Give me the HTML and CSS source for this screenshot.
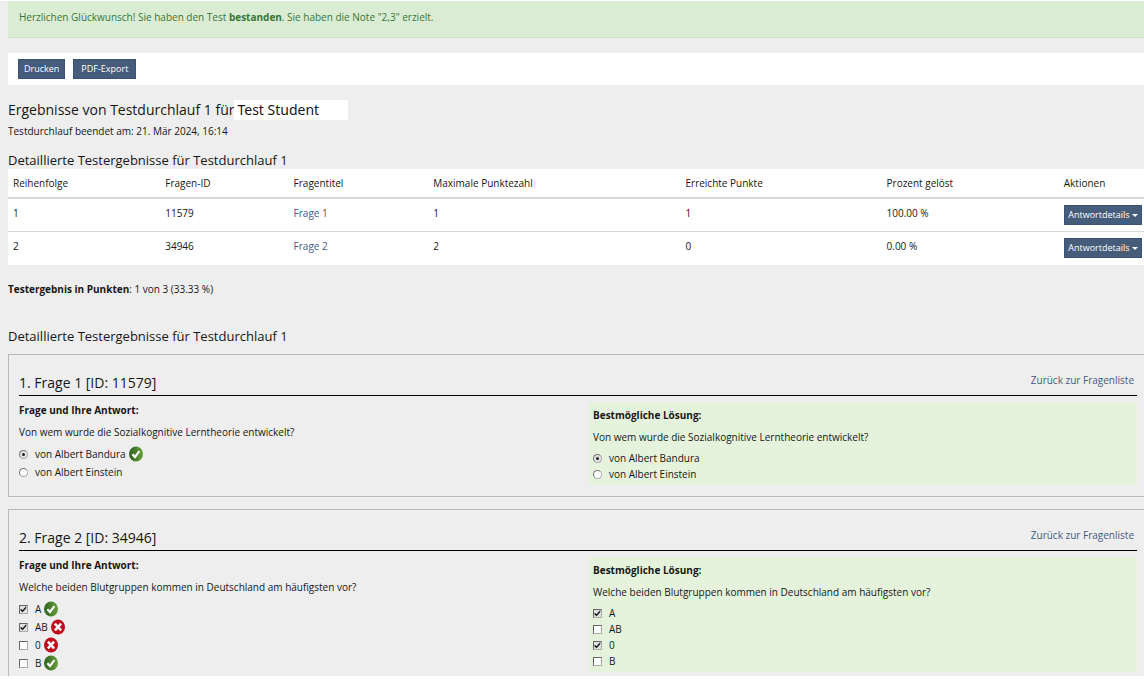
FILE: index.html
```html
<!DOCTYPE html>
<html lang="de">
<head>
<meta charset="utf-8">
<meta name="viewport" content="width=device-width, initial-scale=1">
<title>Testergebnisse</title>
<link rel="stylesheet" href="styles.css">
</head>
<body>
<svg class="sprite" aria-hidden="true">
  <defs>
    <linearGradient id="green" x1="0" y1="0" x2="1" y2="0">
      <stop offset="0" stop-color="#2c6322"/>
      <stop offset="1" stop-color="#67a037"/>
    </linearGradient>
  </defs>
  <symbol id="ok" viewBox="0 0 14 16">
    <ellipse cx="7" cy="8" rx="7" ry="7.6" fill="url(#green)"/>
    <path d="M3.4 8.2 L6 11 L10.4 5.2" fill="none" stroke="#fff" stroke-width="2.2"/>
  </symbol>
  <symbol id="wrong" viewBox="0 0 14 16">
    <ellipse cx="7" cy="8" rx="7" ry="7.6" fill="#c10a1c"/>
    <path d="M3.9 4.7 L10.1 11.3 M10.1 4.7 L3.9 11.3" fill="none" stroke="#fff" stroke-width="2.5"/>
  </symbol>
</svg>
<main class="page">
  <div class="alert" role="status">Herzlichen Glückwunsch! Sie haben den Test <strong>bestanden</strong>. Sie haben die Note "2,3" erzielt.</div>

  <div class="toolbar">
    <button class="btn" type="button">Drucken</button>
    <button class="btn btn-wide" type="button">PDF-Export</button>
  </div>

  <h1 class="heading heading-main">Ergebnisse von Testdurchlauf 1 für <span class="student">Test Student</span></h1>
  <p class="finished">Testdurchlauf beendet am: 21. Mär 2024, 16:14</p>

  <h2 class="heading heading-table">Detaillierte Testergebnisse für Testdurchlauf 1</h2>
  <table class="results">
    <colgroup>
      <col class="c-order"><col class="c-id"><col class="c-title"><col class="c-max"><col class="c-points"><col class="c-percent"><col class="c-action">
    </colgroup>
    <thead>
      <tr><th>Reihenfolge</th><th>Fragen-ID</th><th>Fragentitel</th><th>Maximale Punktezahl</th><th>Erreichte Punkte</th><th>Prozent gelöst</th><th>Aktionen</th></tr>
    </thead>
    <tbody>
      <tr><td>1</td><td>11579</td><td><a class="link" href="#frage1">Frage 1</a></td><td>1</td><td>1</td><td>100.00 %</td><td><button class="btn btn-menu" type="button">Antwortdetails<span class="caret"></span></button></td></tr>
      <tr><td>2</td><td>34946</td><td><a class="link" href="#frage2">Frage 2</a></td><td>2</td><td>0</td><td>0.00 %</td><td><button class="btn btn-menu" type="button">Antwortdetails<span class="caret"></span></button></td></tr>
    </tbody>
  </table>
  <p class="total"><strong>Testergebnis in Punkten</strong>: 1 von 3 (33.33 %)</p>

  <h2 class="heading heading-detail">Detaillierte Testergebnisse für Testdurchlauf 1</h2>

  <section class="question" id="frage1">
    <header class="question-head">
      <h3 class="heading">1. Frage 1 [ID: 11579]</h3>
      <a class="link back" href="#">Zurück zur Fragenliste</a>
    </header>
    <div class="columns">
      <div class="answer">
        <h4 class="label">Frage und Ihre Antwort:</h4>
        <p class="text">Von wem wurde die Sozialkognitive Lerntheorie entwickelt?</p>
        <div class="option"><input class="radio" type="radio" name="a1" id="a1a" checked><label for="a1a">von Albert Bandura</label><svg class="mark"><use href="#ok"/></svg></div>
        <div class="option"><input class="radio" type="radio" name="a1" id="a1b"><label for="a1b">von Albert Einstein</label></div>
      </div>
      <div class="solution">
        <h4 class="label">Bestmögliche Lösung:</h4>
        <p class="text">Von wem wurde die Sozialkognitive Lerntheorie entwickelt?</p>
        <div class="option"><input class="radio" type="radio" name="s1" id="s1a" checked><label for="s1a">von Albert Bandura</label></div>
        <div class="option"><input class="radio" type="radio" name="s1" id="s1b"><label for="s1b">von Albert Einstein</label></div>
      </div>
    </div>
  </section>

  <section class="question question-last" id="frage2">
    <header class="question-head">
      <h3 class="heading">2. Frage 2 [ID: 34946]</h3>
      <a class="link back" href="#">Zurück zur Fragenliste</a>
    </header>
    <div class="columns">
      <div class="answer">
        <h4 class="label">Frage und Ihre Antwort:</h4>
        <p class="text">Welche beiden Blutgruppen kommen in Deutschland am häufigsten vor?</p>
        <div class="option"><input class="check" type="checkbox" id="a2a" checked><label for="a2a">A</label><svg class="mark"><use href="#ok"/></svg></div>
        <div class="option"><input class="check" type="checkbox" id="a2b" checked><label for="a2b">AB</label><svg class="mark"><use href="#wrong"/></svg></div>
        <div class="option"><input class="check" type="checkbox" id="a2c"><label for="a2c">0</label><svg class="mark"><use href="#wrong"/></svg></div>
        <div class="option"><input class="check" type="checkbox" id="a2d"><label for="a2d">B</label><svg class="mark"><use href="#ok"/></svg></div>
      </div>
      <div class="solution">
        <h4 class="label">Bestmögliche Lösung:</h4>
        <p class="text">Welche beiden Blutgruppen kommen in Deutschland am häufigsten vor?</p>
        <div class="option"><input class="check" type="checkbox" id="s2a" checked><label for="s2a">A</label></div>
        <div class="option"><input class="check" type="checkbox" id="s2b"><label for="s2b">AB</label></div>
        <div class="option"><input class="check" type="checkbox" id="s2c" checked><label for="s2c">0</label></div>
        <div class="option"><input class="check" type="checkbox" id="s2d"><label for="s2d">B</label></div>
      </div>
    </div>
  </section>
</main>
</body>
</html>
```
FILE: styles.css
```css
* { box-sizing: border-box; }

body {
  margin: 0;
  padding: 1px 0 3px;
  background: #fff;
  color: #161616;
  font: 10px/16px "Open Sans", "Noto Sans", sans-serif;
}

.sprite { position: absolute; width: 0; height: 0; }

.page {
  padding-left: 8px;
  background: #eee;
}

h1, h2, h3, h4, p { margin: 0; }

.heading {
  font-size: 14px;
  line-height: 20px;
  font-weight: 400;
}

.alert {
  padding: 8px 11px 12px;
  border-bottom: 1px solid #cfe5bd;
  background: #dbecd4;
  color: #37763a;
}

.toolbar {
  display: flex;
  gap: 8px;
  margin-top: 15px;
  padding: 6px 10px;
  background: #fff;
}

.btn {
  height: 20px;
  padding: 0 5px;
  border: 1px solid #3a5274;
  border-radius: 0;
  background: #455c7b;
  color: #fff;
  font: 9px/18px "Open Sans", "Noto Sans", sans-serif;
  white-space: nowrap;
}

.btn-wide { padding: 0 7px; }

.heading-main {
  display: flex;
  align-items: center;
  margin-top: 15px;
}

.student {
  width: 114px;
  padding-left: 3px;
  background: #fff;
  font-family: "Noto Sans", sans-serif;
  line-height: 20px;
}

.finished { margin-top: 3px; }

h2.heading { font-size: 13px; line-height: 18px; }
.heading-table { margin-top: 12px; }

.results {
  width: 100%;
  border-collapse: collapse;
  table-layout: fixed;
  background: #fff;
}

.c-order { width: 13.4%; }
.c-id { width: 11.3%; }
.c-title { width: 12.3%; }
.c-max { width: 22.2%; }
.c-points { width: 17.7%; }
.c-percent { width: 15.6%; }
.c-action { width: 7.5%; }

.results th {
  padding: 6px 5px;
  border-bottom: 2px solid #d8d8d8;
  font-weight: 400;
  text-align: left;
  white-space: nowrap;
}

.results td {
  height: 33px;
  padding: 6px 5px;
  vertical-align: top;
}

.results tbody tr + tr td { border-top: 1px solid #d8d8d8; }

.results td:last-child { padding: 6px 2px 6px 5px; }

.btn-menu {
  display: flex;
  align-items: center;
  justify-content: center;
  gap: 2px;
  width: 100%;
}

.caret {
  border: 3px solid transparent;
  border-top-color: #fff;
  border-bottom: 0;
}

.link { color: #3f5a84; text-decoration: none; }

.total { margin-top: 16px; }
.heading-detail { margin-top: 30px; }

.question {
  margin-top: 9px;
  padding: 18px 7px 11px 10px;
  border: 1px solid #b8b8b8;
  border-right: 0;
}

.question + .question { margin-top: 12px; }

.question-last { padding-bottom: 4px; border-bottom: 0; }

.question-head {
  display: flex;
  justify-content: space-between;
  padding-bottom: 2px;
  border-bottom: 1px solid #000;
}

.back { padding-right: 3px; line-height: 14px; }

.columns {
  display: grid;
  grid-template-columns: 570fr 548fr;
  padding-top: 6px;
}

.solution { padding: 5px 4px 3px; background: #e6f3dc; }

.label { font-size: 10px; line-height: 16px; font-weight: 700; }
.text { margin: 6px 0 5px; }

.option { display: flex; align-items: center; height: 18px; }
.solution .option { height: 16px; }
.option label { margin-left: 7px; }

.mark { width: 14px; height: 16px; margin-left: 3px; }

.radio, .check {
  display: grid;
  place-items: center;
  width: 9px;
  height: 9px;
  margin: 1px 0 0;
  appearance: none;
  border: 1px solid #777;
  background: #fff;
}

.radio { border-color: #777 #aaa #aaa #777; border-radius: 50%; }
.check { border-color: #666 #aaa #aaa #666; }

.radio:checked, .check:checked { background: #e2e2e2; }

.radio:checked::before {
  width: 3px;
  height: 3px;
  border-radius: 50%;
  background: #222;
  content: "";
}

.check:checked::before {
  width: 7px;
  height: 7px;
  background: #222;
  clip-path: polygon(8% 45%, 38% 65%, 90% 8%, 90% 38%, 38% 95%, 8% 75%);
  content: "";
}
```
